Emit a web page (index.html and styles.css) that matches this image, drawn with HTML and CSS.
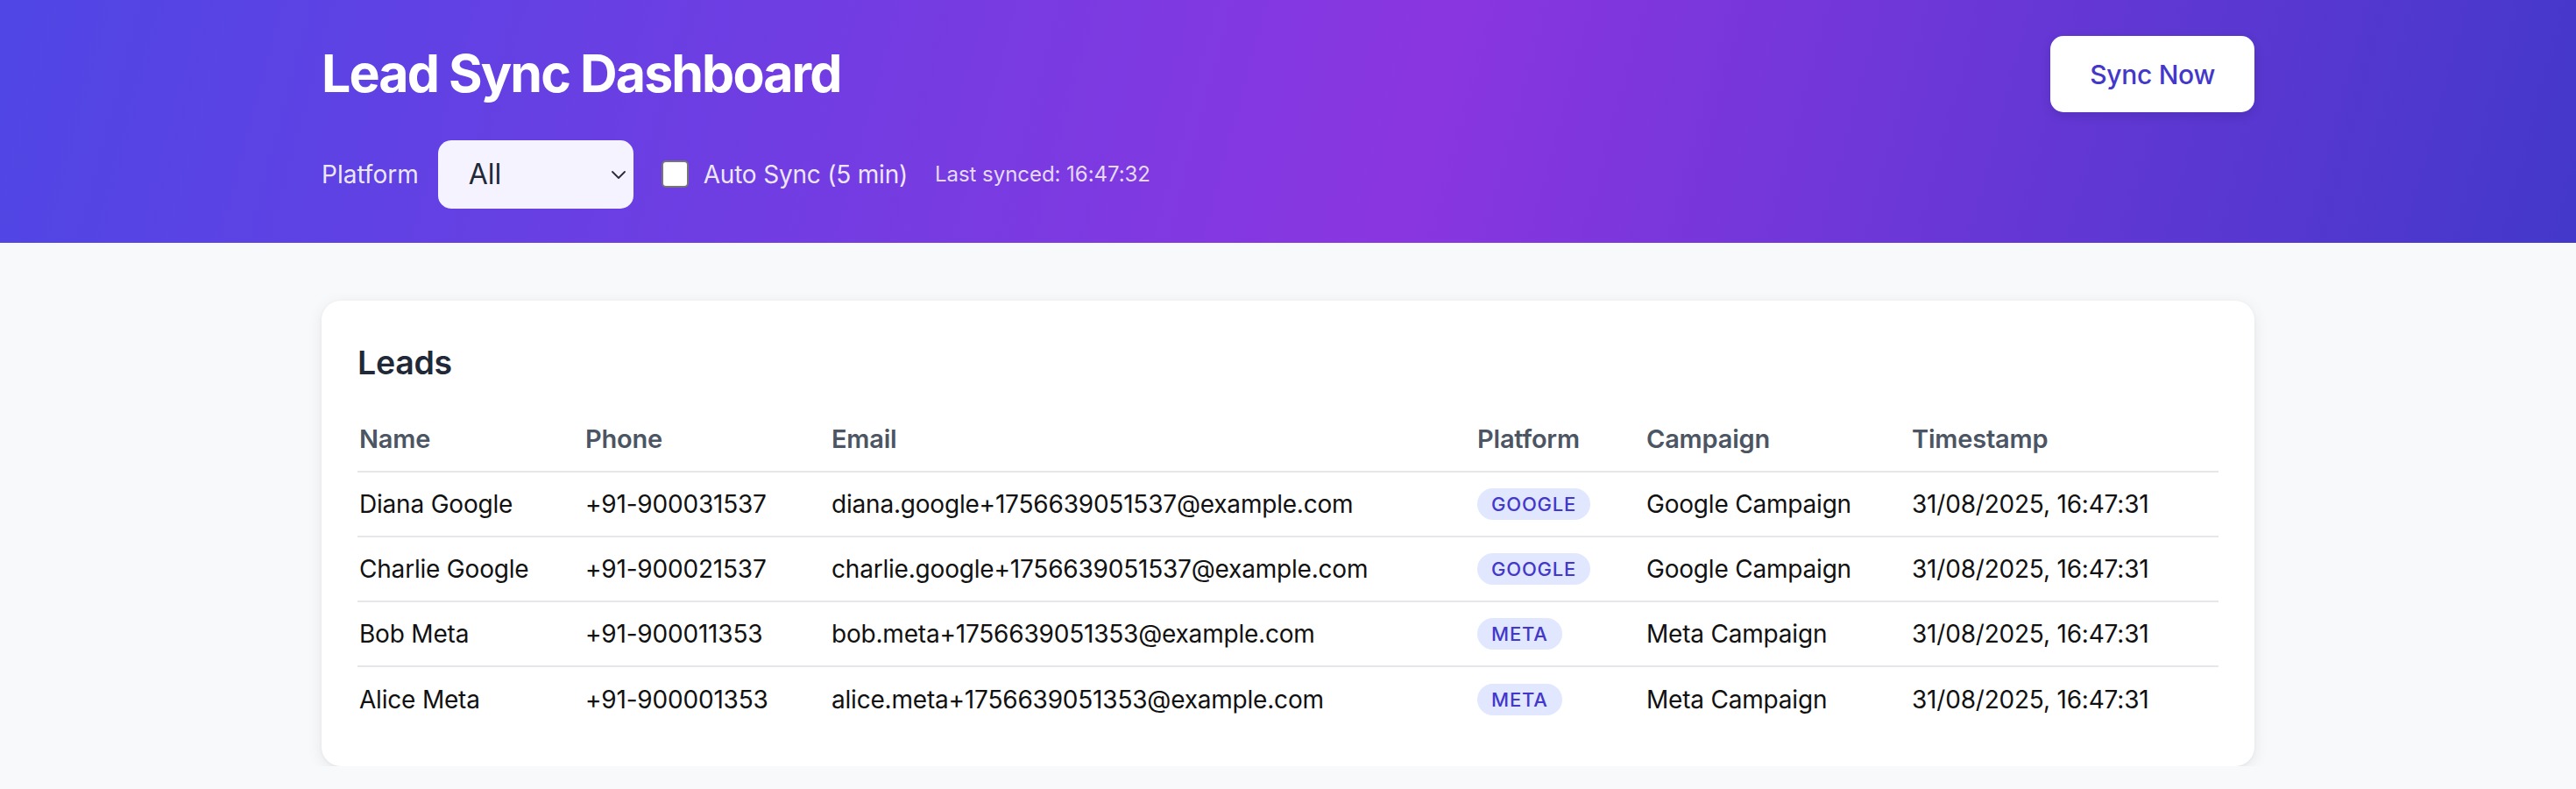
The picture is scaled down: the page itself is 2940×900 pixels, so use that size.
FILE: index.html
```html
<!DOCTYPE html>
<html lang="en">
<head>
<meta charset="utf-8">
<title>Lead Sync Dashboard</title>
<link rel="stylesheet" href="styles.css">
</head>
<body>
<header class="header">
  <div class="container">
    <div class="header-top">
      <h1 class="title">Lead Sync Dashboard</h1>
      <button class="btn-sync">Sync Now</button>
    </div>
    <div class="controls">
      <label class="ctl-label" for="platform">Platform</label>
      <div class="select-wrap">
        <select id="platform" class="select">
          <option>All</option>
          <option>Google</option>
          <option>Meta</option>
        </select>
        <svg class="chevron" width="16" height="9" viewBox="0 0 16 9"><path d="M1 1 L8 8 L15 1" fill="none" stroke="#2b2b33" stroke-width="1.8" stroke-linecap="round" stroke-linejoin="round"/></svg>
      </div>
      <label class="auto">
        <input type="checkbox" class="check">
        <span class="auto-text">Auto Sync (5 min)</span>
      </label>
      <span class="last-synced">Last synced: 16:47:32</span>
    </div>
  </div>
</header>
<main class="main">
  <div class="container">
    <section class="card">
      <h2 class="card-title">Leads</h2>
      <table class="leads">
        <colgroup>
          <col class="c-name"><col class="c-phone"><col class="c-email"><col class="c-platform"><col class="c-campaign"><col class="c-time">
        </colgroup>
        <thead>
          <tr><th>Name</th><th>Phone</th><th>Email</th><th>Platform</th><th>Campaign</th><th>Timestamp</th></tr>
        </thead>
        <tbody>
          <tr><td>Diana Google</td><td>+91-900031537</td><td>diana.google+1756639051537@example.com</td><td><span class="badge">GOOGLE</span></td><td>Google Campaign</td><td>31/08/2025, 16:47:31</td></tr>
          <tr><td>Charlie Google</td><td>+91-900021537</td><td>charlie.google+1756639051537@example.com</td><td><span class="badge">GOOGLE</span></td><td>Google Campaign</td><td>31/08/2025, 16:47:31</td></tr>
          <tr><td>Bob Meta</td><td>+91-900011353</td><td>bob.meta+1756639051353@example.com</td><td><span class="badge">META</span></td><td>Meta Campaign</td><td>31/08/2025, 16:47:31</td></tr>
          <tr><td>Alice Meta</td><td>+91-900001353</td><td>alice.meta+1756639051353@example.com</td><td><span class="badge">META</span></td><td>Meta Campaign</td><td>31/08/2025, 16:47:31</td></tr>
        </tbody>
      </table>
    </section>
  </div>
</main>
</body>
</html>
```
FILE: styles.css
```css
* { box-sizing: border-box; }
html, body { margin: 0; padding: 0; }
body {
  background: #f8f9fb;
  font-family: Inter, "Liberation Sans", sans-serif;
  color: #111827;
}
.container {
  width: 2206px;
  margin: 0 auto;
}
.header {
  background: linear-gradient(105deg, #4f46e5 0%, #8a36e0 55%, #4338ca 100%);
  padding: 41px 0 39px;
}
.header-top {
  display: flex;
  justify-content: space-between;
  align-items: center;
  height: 87px;
}
.title {
  margin: 0;
  color: #fff;
  font-size: 59px;
  line-height: 1.2;
  font-weight: 700;
  letter-spacing: -1.9px;
}
.btn-sync {
  height: 87px;
  padding: 0 45px;
  background: #fff;
  color: #4338ca;
  border: none;
  border-radius: 15px;
  font-family: inherit;
  font-size: 30px;
  font-weight: 500;
  letter-spacing: -0.3px;
  box-shadow: 0 4px 12px rgba(30, 20, 90, 0.18);
}
.controls {
  display: flex;
  align-items: center;
  margin-top: 31px;
  height: 79px;
}
.ctl-label {
  color: rgba(255, 255, 255, 0.9);
  font-size: 28px;
  margin-right: 22px;
}
.select-wrap {
  position: relative;
  width: 223px;
  height: 78px;
}
.select {
  appearance: none;
  -webkit-appearance: none;
  width: 100%;
  height: 100%;
  border: none;
  border-radius: 15px;
  background: #f5f3ff;
  color: #1f2937;
  font-family: inherit;
  font-size: 32px;
  padding: 0 0 0 35px;
}
.chevron {
  position: absolute;
  right: 9px;
  top: 35px;
  pointer-events: none;
}
.auto {
  display: flex;
  align-items: center;
  margin-left: 32px;
}
.check {
  appearance: none;
  -webkit-appearance: none;
  margin: 0;
  width: 31px;
  height: 31px;
  background: #fff;
  border: 2px solid #767676;
  border-radius: 5px;
}
.auto-text {
  margin-left: 17px;
  color: rgba(255, 255, 255, 0.9);
  font-size: 28px;
  letter-spacing: -0.2px;
}
.last-synced {
  margin-left: 31px;
  color: rgba(255, 255, 255, 0.82);
  font-size: 24px;
  letter-spacing: -0.05px;
}
.main {
  padding-top: 66px;
}
.card {
  background: #fff;
  border-radius: 22px;
  padding: 43px 41px 40px;
  box-shadow: 0 4px 18px rgba(0, 0, 0, 0.08), 0 1px 4px rgba(0, 0, 0, 0.04);
}
.card-title {
  margin: 0 0 23px;
  font-size: 37.5px;
  line-height: 56px;
  font-weight: 600;
  color: #1f2937;
  letter-spacing: -0.3px;
}
.leads {
  width: 100%;
  border-collapse: collapse;
  table-layout: fixed;
}
.c-name { width: 258px; }
.c-phone { width: 281px; }
.c-email { width: 737px; }
.c-platform { width: 193px; }
.c-campaign { width: 303px; }
.c-time { width: 352px; }
.leads th {
  text-align: left;
  font-size: 29px;
  font-weight: 600;
  color: #4b5563;
  line-height: 36px;
  padding: 18px 0 18px 2px;
  border-bottom: 2px solid #e5e7eb;
  letter-spacing: -0.2px;
}
.leads td {
  font-size: 28px;
  color: #111;
  line-height: 36px;
  height: 74px;
  padding: 18px 0 18px 2px;
  border-bottom: 2px solid #e5e7eb;
  white-space: nowrap;
  letter-spacing: -0.2px;
}
.leads tbody tr:last-child td {
  border-bottom: none;
}
.badge {
  display: inline-block;
  height: 36px;
  line-height: 36px;
  padding: 0 16px;
  border-radius: 18px;
  background: #e0e7ff;
  color: #4338ca;
  font-size: 22px;
  font-weight: 500;
  letter-spacing: 0.8px;
  vertical-align: top;
}
```
